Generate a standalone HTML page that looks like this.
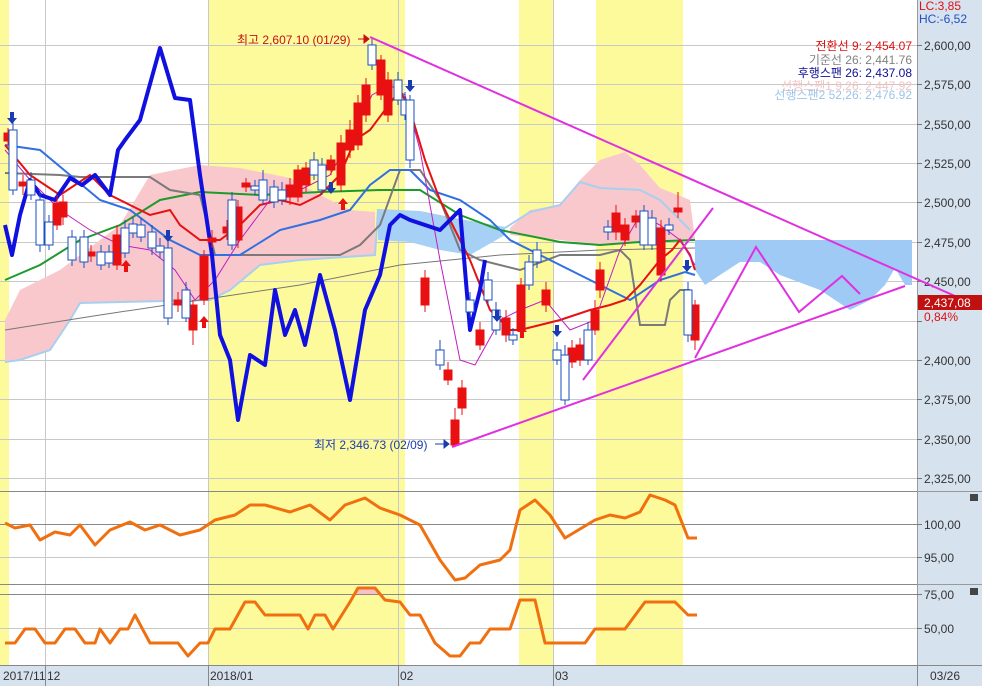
<!DOCTYPE html>
<html><head><meta charset="utf-8"><style>
html,body{margin:0;padding:0;background:#fff;}
svg{display:block;font-family:"Liberation Sans","Noto Sans CJK KR",sans-serif;}
</style></head><body>
<svg width="982" height="686" viewBox="0 0 982 686" xmlns="http://www.w3.org/2000/svg">
<rect width="982" height="686" fill="#fff"/>
<g fill="#fdfa9c">
<rect x="0" y="0" width="9" height="665"/>
<rect x="208" y="0" width="197" height="665"/>
<rect x="519" y="0" width="34" height="665"/>
<rect x="596" y="0" width="87" height="665"/>
</g>
<g stroke="#c8c8c8" stroke-width="1">
<line x1="0" y1="45.5" x2="917" y2="45.5"/><line x1="0" y1="84.5" x2="917" y2="84.5"/>
<line x1="0" y1="124.5" x2="917" y2="124.5"/><line x1="0" y1="163.5" x2="917" y2="163.5"/>
<line x1="0" y1="202.5" x2="917" y2="202.5"/><line x1="0" y1="242.5" x2="917" y2="242.5"/>
<line x1="0" y1="281.5" x2="917" y2="281.5"/><line x1="0" y1="321.5" x2="917" y2="321.5"/>
<line x1="0" y1="360.5" x2="917" y2="360.5"/><line x1="0" y1="399.5" x2="917" y2="399.5"/>
<line x1="0" y1="439.5" x2="917" y2="439.5"/><line x1="0" y1="478.5" x2="917" y2="478.5"/>
<line x1="0" y1="557.5" x2="917" y2="557.5"/><line x1="0" y1="628.5" x2="917" y2="628.5"/>
<line x1="45.5" y1="0" x2="45.5" y2="665"/><line x1="208.5" y1="0" x2="208.5" y2="665"/>
<line x1="398.5" y1="0" x2="398.5" y2="665"/><line x1="553.5" y1="0" x2="553.5" y2="665"/>
</g>
<g stroke="#888" stroke-width="1">
<line x1="0" y1="491.5" x2="917" y2="491.5"/><line x1="0" y1="584.5" x2="917" y2="584.5"/>
<line x1="0" y1="524.5" x2="917" y2="524.5"/><line x1="0" y1="594.5" x2="917" y2="594.5"/>
</g>
<polygon fill="#f9c8cc" points="5,320 20,290 60,270 120,225 150,175 200,165 240,168 290,178 320,195 350,210 375,212 375,255 330,258 300,260 260,265 230,290 210,300 80,303 70,320 50,350 20,360 5,362"/>
<polygon fill="#a6d0f5" points="378,210 420,212 460,220 505,228 505,235 470,255 440,250 410,242 378,240"/>
<polygon fill="#f9c8cc" points="510,228 530,210 560,205 580,180 600,160 625,152 640,165 660,188 690,200 695,240 600,245 560,240 510,235"/>
<polygon fill="#9fcaf5" points="695,240 912,240 912,285 905,285 895,268 885,285 870,300 850,310 820,290 780,275 760,262 740,262 720,275 705,285 695,270"/>
<polyline fill="none" stroke="#a9cff0" stroke-width="2" points="5,362 20,360 50,350 70,320 80,303 210,300 230,290 260,265 300,260 330,258 375,255 378,210 420,212 460,220 505,228 530,212 560,205 580,182 600,188 640,190 660,200 690,230"/>
<polyline fill="none" stroke="#777" stroke-width="1" points="5,330 100,315 200,300 300,285 400,265 500,255 600,250 695,248"/>
<polyline fill="none" stroke="#1c9a2a" stroke-width="2" points="5,280 40,265 80,240 120,225 160,200 200,192 260,195 320,192 380,190 420,190 460,215 500,230 560,242 600,245 640,242 695,240"/>
<polyline fill="none" stroke="#7a7a7a" stroke-width="2" points="5,173 60,175 80,177 150,177 170,190 200,195 215,255 300,255 340,255 360,245 380,225 400,170 420,170 440,200 460,250 480,260 520,270 560,255 600,255 620,250 630,260 640,325 665,325 670,300 680,290 690,290"/>
<polyline fill="none" stroke="#3070e0" stroke-width="2" points="5,145 40,150 70,175 100,200 130,210 170,240 200,255 240,255 280,230 320,220 350,210 370,185 390,170 410,170 430,190 460,200 490,220 510,240 540,255 570,270 600,285 630,300 660,280 685,272 695,275"/>
<polyline fill="none" stroke="#e81010" stroke-width="2" points="5,145 30,175 60,195 90,175 110,195 130,205 150,215 170,210 180,225 200,240 220,240 240,225 260,205 280,200 300,205 320,195 340,175 355,140 370,130 385,110 400,90 410,110 425,160 440,200 460,240 470,260 490,310 510,330 520,330 540,325 560,320 590,310 610,305 625,300 640,285 660,260 672,250 680,240 690,255 695,270"/>
<polyline fill="none" stroke="#c020c0" stroke-width="1" points="5,150 30,180 60,210 90,230 120,245 150,250 175,270 195,300 215,280 240,240 270,200 300,190 330,175 355,130 372,95 390,85 405,95 420,150 440,260 460,360 475,365 500,320 520,310 545,300 570,330 595,320 620,250 640,215 660,225 680,240 695,265"/>
<polyline fill="none" stroke="#1010e0" stroke-width="4" stroke-linejoin="round" points="5,225 12,255 20,215 30,180 40,195 55,200 70,178 82,185 95,175 110,195 118,150 125,140 140,120 160,48 175,98 190,100 200,175 212,255 220,335 230,360 238,420 250,355 265,365 275,290 285,335 295,310 305,345 320,275 335,330 350,400 365,310 380,275 390,225 400,215 410,220 425,225 440,230 450,220 460,210 470,330 480,290 485,260"/>
<g stroke="#e81010" stroke-width="1" fill="#e81010">
<path d="M8,128V145M23,175V195M57,195V230M63,195V225M91,245V262M117,225V270M178,292V312M193,300V345M204,250V305M212,230V248M227,220V240M238,200V248M246,178V192M290,178V205M298,165V202M306,162V192M331,155V175M341,135V192M350,120V158M358,95V150M366,78V122M381,55V100M388,72V122M425,270V312M448,362V385M455,408V447M462,380V415M480,322V350M506,310V342M521,278V338M546,282V312M572,340V368M580,338V366M595,300V335M600,262V298M616,205V240M625,218V246M636,210V228M661,220V282M678,192V218M695,300V350"/>
<rect x="4" y="133" width="8" height="8"/><rect x="19" y="182" width="8" height="4"/><rect x="53" y="203" width="8" height="22"/><rect x="59" y="202" width="8" height="15"/><rect x="87" y="252" width="8" height="4"/><rect x="113" y="235" width="8" height="30"/><rect x="174" y="300" width="8" height="5"/><rect x="189" y="305" width="8" height="25"/><rect x="200" y="256" width="8" height="44"/><rect x="208" y="238" width="8" height="4"/><rect x="223" y="227" width="8" height="6"/><rect x="234" y="207" width="8" height="33"/><rect x="242" y="183" width="8" height="4"/><rect x="286" y="185" width="8" height="12"/><rect x="294" y="170" width="8" height="27"/><rect x="302" y="168" width="8" height="17"/><rect x="327" y="160" width="8" height="10"/><rect x="337" y="143" width="8" height="42"/><rect x="346" y="130" width="8" height="20"/><rect x="354" y="103" width="8" height="42"/><rect x="362" y="85" width="8" height="30"/><rect x="377" y="60" width="8" height="35"/><rect x="384" y="80" width="8" height="35"/><rect x="421" y="278" width="8" height="27"/><rect x="444" y="370" width="8" height="10"/><rect x="451" y="420" width="8" height="25"/><rect x="458" y="388" width="8" height="20"/><rect x="476" y="330" width="8" height="15"/><rect x="502" y="318" width="8" height="17"/><rect x="517" y="285" width="8" height="45"/><rect x="542" y="290" width="8" height="15"/><rect x="568" y="348" width="8" height="14"/><rect x="576" y="345" width="8" height="15"/><rect x="591" y="310" width="8" height="20"/><rect x="596" y="270" width="8" height="20"/><rect x="612" y="213" width="8" height="19"/><rect x="621" y="225" width="8" height="15"/><rect x="632" y="216" width="8" height="6"/><rect x="657" y="228" width="8" height="47"/><rect x="674" y="208" width="8" height="4"/><rect x="691" y="305" width="8" height="35"/>
</g>
<g stroke="#1a4fc0" stroke-width="1" fill="#fff">
<path d="M13,120V195M31,172V200M40,192V252M49,215V250M72,230V266M84,230V268M101,245V270M109,245V268M125,220V258M133,217V238M141,218V242M152,225V255M160,238V258M168,240V325M186,282V322M232,192V250M255,180V195M263,170V205M274,180V208M282,182V205M314,152V180M322,158V195M372,38V70M398,72V105M405,92V120M410,95V168M440,340V370M470,292V318M488,272V305M496,302V335M513,328V345M529,255V290M537,242V268M557,342V365M565,345V405M588,322V365M608,220V240M644,205V250M652,210V250M669,218V235M688,282V342"/>
<rect x="9" y="130" width="8" height="60"/><rect x="27" y="180" width="8" height="15"/><rect x="36" y="200" width="8" height="45"/><rect x="45" y="222" width="8" height="23"/><rect x="68" y="237" width="8" height="23"/><rect x="80" y="237" width="8" height="25"/><rect x="97" y="252" width="8" height="13"/><rect x="105" y="252" width="8" height="11"/><rect x="121" y="228" width="8" height="25"/><rect x="129" y="224" width="8" height="9"/><rect x="137" y="225" width="8" height="12"/><rect x="148" y="232" width="8" height="16"/><rect x="156" y="246" width="8" height="6"/><rect x="164" y="248" width="8" height="70"/><rect x="182" y="290" width="8" height="28"/><rect x="228" y="200" width="8" height="45"/><rect x="251" y="186" width="8" height="4"/><rect x="259" y="180" width="8" height="20"/><rect x="270" y="187" width="8" height="15"/><rect x="278" y="190" width="8" height="10"/><rect x="310" y="160" width="8" height="15"/><rect x="318" y="165" width="8" height="25"/><rect x="368" y="45" width="8" height="20"/><rect x="394" y="80" width="8" height="20"/><rect x="401" y="100" width="8" height="15"/><rect x="406" y="100" width="8" height="60"/><rect x="436" y="350" width="8" height="15"/><rect x="466" y="300" width="8" height="12"/><rect x="484" y="280" width="8" height="20"/><rect x="492" y="310" width="8" height="20"/><rect x="509" y="335" width="8" height="5"/><rect x="525" y="262" width="8" height="23"/><rect x="533" y="250" width="8" height="12"/><rect x="553" y="350" width="8" height="10"/><rect x="561" y="355" width="8" height="45"/><rect x="584" y="330" width="8" height="30"/><rect x="604" y="227" width="8" height="5"/><rect x="640" y="211" width="8" height="34"/><rect x="648" y="218" width="8" height="27"/><rect x="665" y="225" width="8" height="5"/><rect x="684" y="290" width="8" height="45"/>
</g>
<g fill="#1a3cb0">
<path d="M10,112h4v6h3l-5,6l-5,-6h3z"/><path d="M166,230h4v6h3l-5,6l-5,-6h3z"/><path d="M329,182h4v6h3l-5,6l-5,-6h3z"/><path d="M408,80h4v6h3l-5,6l-5,-6h3z"/><path d="M495,310h4v6h3l-5,6l-5,-6h3z"/><path d="M555,325h4v6h3l-5,6l-5,-6h3z"/><path d="M685,260h4v6h3l-5,6l-5,-6h3z"/>
</g>
<g fill="#e81010">
<path d="M124,272h4v-6h3l-5,-6l-5,6h3z"/><path d="M202,328h4v-6h3l-5,-6l-5,6h3z"/><path d="M341,210h4v-6h3l-5,-6l-5,6h3z"/><path d="M520,338h4v-6h3l-5,-6l-5,6h3z"/>
</g>
<g fill="none" stroke="#e030e0" stroke-width="2">
<line x1="452" y1="447" x2="905" y2="286"/>
<line x1="583" y1="380" x2="713" y2="208"/>
<polyline points="695,358 756,247 799,312 842,276 860,294"/>
</g>
<text x="237" y="44" font-size="12" fill="#c81010">최고 2,607.10 (01/29)</text>
<path d="M358,39h10M364,35l5,4l-5,4z" stroke="#c81010" fill="#c81010"/>
<text x="314" y="449" font-size="12" fill="#1a3cb0">최저 2,346.73 (02/09)</text>
<path d="M435,444h12M444,440l5,4l-5,4z" stroke="#1a3cb0" fill="#1a3cb0"/>
<g font-size="12" text-anchor="end">
<text x="912" y="50" fill="#e01010">전환선 9: 2,454.07</text>
<text x="912" y="64" fill="#808080">기준선 26: 2,441.76</text>
<text x="912" y="77" fill="#101090">후행스팬 26: 2,437.08</text>
<text x="912" y="90" fill="#f3c4c4">선행스팬1 9,26: 2,447.92</text>
<text x="912" y="99" fill="#9cc4e8">선행스팬2 52,26: 2,476.92</text>
</g>
<polyline fill="none" stroke="#f07010" stroke-width="3" stroke-linejoin="round" points="5,523 15,528 30,525 40,540 55,532 70,535 80,525 95,545 110,530 130,522 145,530 160,525 180,535 200,530 215,520 235,515 250,505 265,505 290,512 310,505 330,520 345,505 365,498 380,508 400,515 420,525 440,560 455,580 465,578 480,565 500,560 510,550 520,510 535,500 550,515 565,538 595,520 610,515 625,518 640,512 650,495 665,500 675,505 688,538 697,538"/>
<polygon fill="#f9c0c8" points="355,594 360,588 375,588 380,594"/>
<polyline fill="none" stroke="#f07010" stroke-width="3" stroke-linejoin="round" points="5,643 15,643 25,629 35,629 45,643 55,643 65,629 75,629 85,643 95,643 100,629 110,643 120,629 128,629 135,615 150,643 178,643 188,656 200,643 208,643 215,629 230,629 245,602 255,602 265,615 300,615 308,629 315,615 325,615 333,629 350,602 358,588 375,588 385,600 400,602 410,615 420,615 435,643 450,656 460,656 470,643 480,643 490,629 510,629 520,600 535,600 545,643 560,643 570,643 585,643 595,629 625,629 645,602 675,602 688,615 697,615"/>
<rect x="917" y="0" width="65" height="686" fill="#d7e2ef"/>
<line x1="917.5" y1="0" x2="917.5" y2="686" stroke="#999"/>
<line x1="917" y1="491.5" x2="982" y2="491.5" stroke="#999"/>
<line x1="917" y1="584.5" x2="982" y2="584.5" stroke="#999"/>
<g stroke="#777">
<path d="M917,45.5h5M917,84.5h5M917,124.5h5M917,163.5h5M917,202.5h5M917,242.5h5M917,281.5h5M917,321.5h5M917,360.5h5M917,399.5h5M917,439.5h5M917,478.5h5M917,524.5h5M917,557.5h5M917,594.5h5M917,628.5h5"/>
</g>
<g font-size="12" fill="#333">
<text x="924" y="50">2,600,00</text><text x="924" y="89">2,575,00</text><text x="924" y="129">2,550,00</text><text x="924" y="168">2,525,00</text><text x="924" y="207">2,500,00</text><text x="924" y="247">2,475,00</text><text x="924" y="286">2,450,00</text><text x="924" y="365">2,400,00</text><text x="924" y="404">2,375,00</text><text x="924" y="444">2,350,00</text><text x="924" y="483">2,325,00</text>
<text x="924" y="529">100,00</text><text x="924" y="562">95,00</text><text x="924" y="599">75,00</text><text x="924" y="633">50,00</text>
</g>
<text x="919" y="10" font-size="12" fill="#e01010">LC:3,85</text>
<text x="919" y="23" font-size="12" fill="#2050c0">HC:-6,52</text>
<line x1="370" y1="37" x2="982" y2="308" stroke="#e030e0" stroke-width="2"/>
<rect x="918" y="295" width="64" height="15" fill="#c01010"/>
<text x="924" y="307" font-size="12" fill="#fff">2,437,08</text>
<text x="924" y="321" font-size="12" fill="#e01010">0,84%</text>
<rect x="970" y="494" width="8" height="7" fill="#444"/><rect x="970" y="588" width="8" height="7" fill="#444"/>
<rect x="0" y="666" width="982" height="20" fill="#d7e2ef"/>
<line x1="0" y1="665.5" x2="982" y2="665.5" stroke="#888"/>
<g stroke="#888"><path d="M45.5,666v20M208.5,666v20M398.5,666v20M553.5,666v20M917.5,666v20"/></g>
<g font-size="12" fill="#333">
<text x="3" y="680">2017/11</text><text x="47" y="680">12</text><text x="210" y="680">2018/01</text><text x="400" y="680">02</text><text x="555" y="680">03</text><text x="930" y="680">03/26</text>
</g>
</svg>
</body></html>
